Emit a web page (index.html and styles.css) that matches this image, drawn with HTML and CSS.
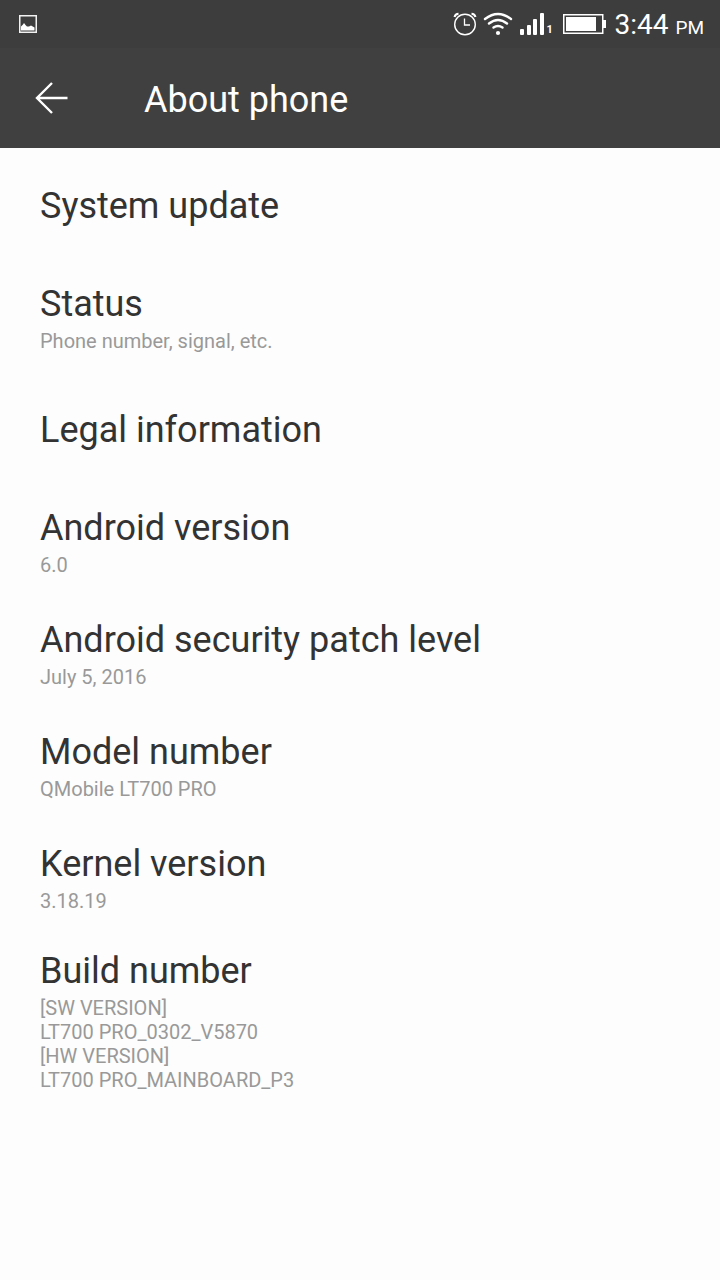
FILE: index.html
```html
<!DOCTYPE html>
<html lang="en">
<head>
<meta charset="utf-8">
<meta name="viewport" content="width=device-width, initial-scale=1">
<title>About phone</title>
<link rel="stylesheet" href="styles.css">
</head>
<body>
<div class="status-bar">
  <svg width="18" height="18" viewBox="0 0 18 18" aria-hidden="true">
    <rect x=".75" y=".75" width="16.500" height="16.500" fill="none" stroke="#f2f2f2" stroke-width="1.500"/>
    <path d="M2 15.500V11.500L4 9.500L5 8L6.500 10L8 11.500H10L12 10.500L15.500 12.500V15.500Z" fill="#fff"/>
  </svg>
  <div class="indicators">
    <svg width="24" height="24" viewBox="0 0 24 24" fill="none" stroke="#fff" aria-hidden="true">
      <circle cx="12" cy="12.500" r="10.300" stroke-width="1.400"/>
      <path d="M11.500 6.500V13H17" stroke-width="1.300"/>
      <path d="M1.500 5C2 3 3.500 1.700 5.500 1.700M22.500 5C22 3 20.500 1.700 18.500 1.700" stroke-width="2"/>
    </svg>
    <svg width="30" height="24" viewBox="0 0 30 24" fill="none" stroke="#fff" stroke-width="2.400" stroke-linecap="round" aria-hidden="true">
      <path d="M2 7Q15-3 28 7M6 11.500Q15 4.500 24 11.500M10.500 15.500Q15 12.500 19.500 15.500"/>
      <circle cx="15" cy="21" r="2.100" fill="#fff" stroke="none"/>
    </svg>
    <div class="signal">
      <svg width="27" height="24" viewBox="0 0 27 24" fill="#fff" aria-hidden="true">
        <rect x="1" y="17" width="4" height="6" rx="1"/>
        <rect x="8" y="13" width="4" height="10" rx="1"/>
        <rect x="14" y="7" width="4" height="16" rx="1"/>
        <rect x="21" y="1" width="4" height="22" rx="1"/>
      </svg>
      <span class="sim">1</span>
    </div>
    <svg class="battery" width="43" height="20" viewBox="0 0 43 20" aria-hidden="true">
      <rect x=".75" y=".75" width="39" height="18.500" fill="none" stroke="#fff" stroke-width="1.500"/>
      <path d="M3 3H33V17H3ZM40 6H43V14H40Z" fill="#fff"/>
    </svg>
    <div class="clock">3:44 <span class="period">PM</span></div>
  </div>
</div>
<header class="app-bar">
  <button class="back" type="button" aria-label="Back">
    <svg width="34" height="34" viewBox="0 0 34 34" fill="none" stroke="#fff" stroke-width="2.400" aria-hidden="true">
      <path d="M18 2L3 17L18 32M3 17H33.500"/>
    </svg>
  </button>
  <h1 class="page-title">About phone</h1>
</header>
<main class="settings">
  <section class="item"><h2 class="item-title">System update</h2></section>
  <section class="item"><h2 class="item-title">Status</h2><p class="summary">Phone number, signal, etc.</p></section>
  <section class="item"><h2 class="item-title">Legal information</h2></section>
  <section class="item"><h2 class="item-title">Android version</h2><p class="summary">6.0</p></section>
  <section class="item"><h2 class="item-title">Android security patch level</h2><p class="summary">July 5, 2016</p></section>
  <section class="item"><h2 class="item-title">Model number</h2><p class="summary">QMobile LT700 PRO</p></section>
  <section class="item"><h2 class="item-title">Kernel version</h2><p class="summary">3.18.19</p></section>
  <section class="item"><h2 class="item-title">Build number</h2><p class="summary">[SW VERSION]<br>LT700 PRO_0302_V5870<br>[HW VERSION]<br>LT700 PRO_MAINBOARD_P3</p></section>
</main>
</body>
</html>
```
FILE: styles.css
```css
* {
  box-sizing: border-box;
}

body {
  margin: 0;
  min-height: 100vh;
  background: #fdfdfd;
  color: #333;
  font-family: Roboto, "Liberation Sans", sans-serif;
}

h1, h2, p {
  margin: 0;
  font-weight: 400;
}

svg {
  display: block;
  flex: none;
}

.status-bar {
  display: flex;
  align-items: center;
  justify-content: space-between;
  height: 48px;
  padding: 0 16px 0 19px;
  background: #3d3d3d;
  color: #fff;
}

.indicators {
  display: flex;
  align-items: center;
  gap: 6px;
}

.signal {
  display: flex;
  align-items: flex-end;
}

.sim {
  width: 7px;
  font-size: 11px;
  font-weight: 700;
  line-height: 12px;
}

.battery {
  margin: 0 2px 0 4px;
}

.clock {
  font-size: 28px;
  line-height: 32px;
  padding-top: 4px;
  white-space: nowrap;
}

.period {
  font-size: 19px;
}

.app-bar {
  display: flex;
  align-items: center;
  height: 100px;
  padding: 0 34px;
  background: #404040;
  color: #fff;
}

.back {
  padding: 0;
  border: 0;
  background: none;
  cursor: pointer;
}

.page-title {
  margin-left: 76px;
  padding-top: 4px;
  font-size: 36px;
  line-height: 44px;
}

.settings {
  padding-top: 2px;
}

.item {
  display: flex;
  flex-direction: column;
  justify-content: center;
  min-height: 112px;
  padding: 15px 40px;
}

.item-title {
  font-size: 36px;
  line-height: 44px;
}

.summary {
  padding: 3px 0 1px;
  color: #999;
  font-size: 20px;
  line-height: 24px;
}
```
